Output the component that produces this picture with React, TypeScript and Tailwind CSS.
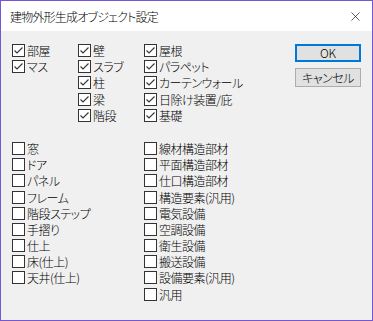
import { X } from 'lucide-react';

const jp = "font-['Noto_Sans_CJK_JP','Noto_Sans',sans-serif] [font-feature-settings:'palt']";

const topCols: { label: string }[][] = [
  [{ label: '部屋' }, { label: 'マス' }],
  [{ label: '壁' }, { label: 'スラブ' }, { label: '柱' }, { label: '梁' }, { label: '階段' }],
  [{ label: '屋根' }, { label: 'パラペット' }, { label: 'カーテンウォール' }, { label: '日除け装置/庇' }, { label: '基礎' }],
];

const bottomLeft = ['窓', 'ドア', 'パネル', 'フレーム', '階段ステップ', '手摺り', '仕上', '床(仕上)', '天井(仕上)'];
const bottomRight = [
  '線材構造部材',
  '平面構造部材',
  '仕口構造部材',
  '構造要素(汎用)',
  '電気設備',
  '空調設備',
  '衛生設備',
  '搬送設備',
  '設備要素(汎用)',
  '汎用',
];

function CheckRow({ label, checked }: { label: string; checked?: boolean }) {
  return (
    <div className="h-[16.2px] flex items-start gap-[2px]">
      <svg width="13" height="13" viewBox="0 0 13 13" className="shrink-0">
        <rect x="0.5" y="0.5" width="12" height="12" fill="#ffffff" stroke="#333333" />
        {checked && <path d="M2.5 6.5 L5 9 L10.5 3.5" fill="none" stroke="#333333" strokeWidth="1.1" />}
      </svg>
      <span className="text-[12px] leading-[13px] font-light tracking-[-0.5px] text-black whitespace-nowrap">{label}</span>
    </div>
  );
}

export default function App() {
  return (
    <div className={`w-[373px] h-[321px] border border-[#7456d6] flex flex-col bg-[#f0f0f0] ${jp}`}>
      {/* Title bar */}
      <div className="h-[30px] bg-white flex items-center justify-between pl-[9px] pr-[9px] shrink-0">
        <span className="text-[12px] font-light tracking-[-0.8px] text-black pt-[1px]">建物外形生成オブジェクト設定</span>
        <X className="w-[15px] h-[15px] text-black" strokeWidth={1} />
      </div>

      <div className="flex-1 pl-[11px] pt-[13px]">
        {/* Checked group */}
        <div className="flex">
          {topCols.map((col, i) => (
            <div key={i} className={i === 2 ? 'w-[151px]' : 'w-[66px]'}>
              {col.map((c) => (
                <CheckRow key={c.label} label={c.label} checked />
              ))}
            </div>
          ))}
          <div className="flex flex-col gap-[6px]">
            <button className="w-[66px] h-[18px] border-2 border-[#0078d7] bg-[#e1e1e1] text-[12px] font-light leading-none text-black flex items-center justify-center">
              OK
            </button>
            <button className="w-[66px] h-[19px] border border-[#adadad] bg-[#e1e1e1] text-[12px] font-light tracking-[-0.5px] leading-none text-black flex items-center justify-center">
              キャンセル
            </button>
          </div>
        </div>

        {/* Unchecked group */}
        <div className="flex mt-[17px]">
          <div className="w-[132px]">
            {bottomLeft.map((l) => (
              <CheckRow key={l} label={l} />
            ))}
          </div>
          <div>
            {bottomRight.map((l) => (
              <CheckRow key={l} label={l} />
            ))}
          </div>
        </div>
      </div>
    </div>
  );
}
